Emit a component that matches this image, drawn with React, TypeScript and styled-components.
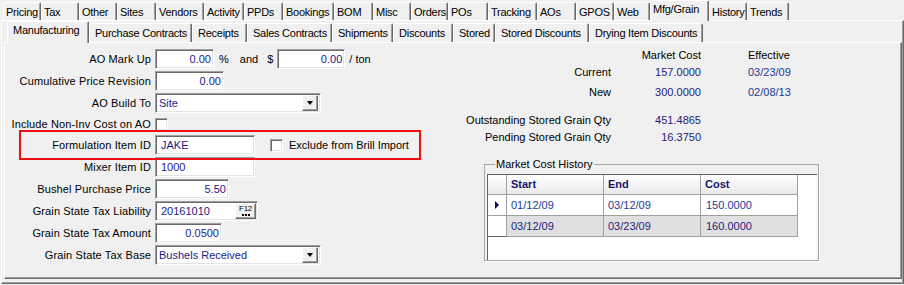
import React from 'react';
import styled, { createGlobalStyle } from 'styled-components';

const GlobalStyle = createGlobalStyle`
	html, body {
		margin: 0;
		padding: 0;
		background: #f0f0f0;
	}
	body {
		font-family: 'Liberation Sans', Arial, sans-serif;
		font-size: 11px;
		color: #000;
	}
`;

const Window = styled.div`
	width: 904px;
	height: 285px;
	box-sizing: border-box;
	padding: 0 0 1px 1px;
	background: #f0f0f0;
	display: flex;
	flex-direction: column;
	overflow: hidden;
`;

const TabStrip = styled.div<{ $h: number; $pl: number }>`
	display: flex;
	align-items: flex-end;
	flex: none;
	height: ${(p) => p.$h}px;
	padding-left: ${(p) => p.$pl}px;
	position: relative;
	z-index: 1;
`;

const Tab = styled.div<{ $w: number; $h: number; $pad: number; $active?: boolean }>`
	box-sizing: border-box;
	width: ${(p) => p.$w}px;
	height: ${(p) => (p.$active ? p.$h + 3 : p.$h)}px;
	margin-bottom: ${(p) => (p.$active ? -1 : 0)}px;
	padding: ${(p) => (p.$active ? 1 : 2)}px 0 0 ${(p) => p.$pad}px;
	line-height: 14px;
	letter-spacing: -0.25px;
	white-space: nowrap;
	overflow: hidden;
	background: #f0f0f0;
	border-top: 1px solid #fff;
	border-left: 1px solid #fff;
	border-right: 1px solid #696969;
	border-radius: 2px 2px 0 0;
	box-shadow: inset -1px 0 #a0a0a0;
`;

const Panel = styled.div<{ $p: string }>`
	flex: 1;
	box-sizing: border-box;
	display: flex;
	flex-direction: column;
	padding: ${(p) => p.$p};
	border: 1px solid;
	border-color: #fff #696969 #696969 #fff;
	box-shadow: inset -1px -1px #a0a0a0;
`;

const PageBody = styled.div`
	flex: 1;
	box-sizing: border-box;
	display: flex;
	padding-top: 4px;
	border: 1px solid;
	border-color: #fff #696969 #696969 #fff;
	box-shadow: inset -1px -1px #a0a0a0;
`;

/* ---------- left form ---------- */

const Form = styled.div`
	position: relative;
	width: 420px;
	margin-top: 2px;
	display: grid;
	grid-template-columns: 146px auto;
	grid-template-rows: 20px 20px 20px 18px 20px 20px 20px 20px 20px 20px;
	column-gap: 4px;
	row-gap: 2px;
	align-content: start;
`;

const Label = styled.div`
	align-self: center;
	text-align: right;
	white-space: nowrap;
	letter-spacing: 0.12px;
`;

const FieldRow = styled.div`
	display: flex;
	align-items: center;
`;

const Unit = styled.span<{ $ml: number }>`
	margin-left: ${(p) => p.$ml}px;
	white-space: nowrap;
`;

const TextBox = styled.div<{ $w: number; $right?: boolean; $ml?: number }>`
	box-sizing: border-box;
	width: ${(p) => p.$w}px;
	height: 20px;
	margin-left: ${(p) => p.$ml || 0}px;
	display: flex;
	align-items: center;
	justify-content: ${(p) => (p.$right ? 'flex-end' : 'flex-start')};
	padding: ${(p) => (p.$right ? '0 2px 0 0' : '0 0 0 5px')};
	background: #fff;
	color: #1c1a8a;
	border: 1px solid;
	border-color: #a0a0a0 #fff #fff #a0a0a0;
	box-shadow: inset 1px 1px #696969, inset -1px -1px #e3e3e3;
	white-space: nowrap;
`;

const Combo = styled(TextBox)`
	padding: 0 2px 0 3px;
	justify-content: space-between;
`;

const RaisedButton = styled.div<{ $w: number; $h: number }>`
	box-sizing: border-box;
	width: ${(p) => p.$w}px;
	height: ${(p) => p.$h}px;
	background: #f0f0f0;
	border: 1px solid;
	border-color: #fff #696969 #696969 #fff;
	box-shadow: inset -1px -1px #a0a0a0;
	display: flex;
	flex-direction: column;
	align-items: center;
	justify-content: center;
	flex: none;
`;

const DownArrow = styled.div`
	width: 0;
	height: 0;
	border-left: 3.5px solid transparent;
	border-right: 3.5px solid transparent;
	border-top: 4px solid #000;
	margin-left: -1px;
`;

const FKey = styled.div`
	font-size: 8px;
	line-height: 8px;
	letter-spacing: -0.3px;
	color: #000;
	margin-top: -1px;
`;

const Dots = styled.div`
	display: flex;
	gap: 1px;
	margin-top: 1px;
	span {
		width: 2px;
		height: 2px;
		background: #000;
	}
`;

const DateBox = styled(TextBox)`
	justify-content: space-between;
	padding-right: 1px;
`;

const CheckBox = styled.div<{ $ml?: number }>`
	box-sizing: border-box;
	width: 13px;
	height: 13px;
	margin-left: ${(p) => p.$ml || 0}px;
	background: #fff;
	border: 1px solid;
	border-color: #a0a0a0 #fff #fff #a0a0a0;
	box-shadow: inset 1px 1px #696969, inset -1px -1px #e3e3e3;
	align-self: center;
	flex: none;
`;

const Highlight = styled.div`
	position: absolute;
	left: 14px;
	top: 81px;
	width: 402px;
	height: 30px;
	box-sizing: border-box;
	border: 2px solid #f01010;
	pointer-events: none;
`;

/* ---------- right side ---------- */

const Side = styled.div`
	margin-left: 37px;
	display: flex;
	flex-direction: column;
`;

const InfoRow = styled.div<{ $mt?: number }>`
	display: grid;
	grid-template-columns: 149px 90px auto;
	height: 17px;
	line-height: 17px;
	margin-top: ${(p) => p.$mt || 0}px;
	white-space: nowrap;
`;

const InfoLabel = styled.div`
	text-align: right;
`;

const InfoValue = styled.div<{ $head?: boolean }>`
	text-align: right;
	color: ${(p) => (p.$head ? '#000' : '#26207e')};
`;

const InfoDate = styled.div<{ $head?: boolean }>`
	padding-left: 47px;
	color: ${(p) => (p.$head ? '#000' : '#1c3a98')};
`;

const Group = styled.fieldset`
	margin: 12px 0 0 22px;
	width: 335px;
	box-sizing: border-box;
	padding: 3px 0 0 2px;
	border: 1px solid #a8a8a8;
	box-shadow: 1px 1px #fff;
	min-inline-size: 0;
	legend {
		margin-left: 8px;
		padding: 0 1px;
		line-height: 13px;
	}
`;

const Grid = styled.div`
	width: 330px;
	height: 86px;
	box-sizing: border-box;
	background: #fff;
	border-top: 1px solid #646464;
	border-left: 1px solid #646464;
	display: grid;
	grid-template-columns: 19px 97px 97px 97px;
	grid-template-rows: 20px 21px 21px;
	align-content: start;
`;

const HeadCell = styled.div`
	box-sizing: border-box;
	background: linear-gradient(#ffffff, #f2f2f2 60%, #e8e8e8);
	border-right: 1px solid #a0a0a0;
	border-bottom: 1px solid #a0a0a0;
	padding-left: 4px;
	line-height: 19px;
	font-weight: bold;
	color: #16166e;
`;

const RowHead = styled.div<{ $last?: boolean }>`
	box-sizing: border-box;
	background: #fff;
	border-right: 1px solid #a0a0a0;
	border-bottom: 1px solid ${(p) => (p.$last ? '#646464' : '#a0a0a0')};
	display: flex;
	align-items: center;
	justify-content: center;
`;

const Pointer = styled.div`
	width: 0;
	height: 0;
	border-top: 4px solid transparent;
	border-bottom: 4px solid transparent;
	border-left: 4px solid #0a0a50;
	margin-left: -1px;
`;

const Cell = styled.div<{ $alt?: boolean; $pl?: number }>`
	box-sizing: border-box;
	background: ${(p) => (p.$alt ? '#e0e0e0' : '#fff')};
	border-right: 1px solid #a0a0a0;
	border-bottom: 1px solid #a0a0a0;
	padding-left: ${(p) => p.$pl || 4}px;
	line-height: 20px;
	color: ${(p) => (p.$alt ? '#26207e' : '#1c3a98')};
`;

const outerTabs: [string, number][] = [
	['Pricing', 38], ['Tax', 38], ['Other', 38], ['Sites', 39], ['Vendors', 48], ['Activity', 40],
	['PPDs', 39], ['Bookings', 51], ['BOM', 39], ['Misc', 38], ['Orders', 37], ['POs', 40],
	['Tracking', 49], ['AOs', 39], ['GPOS', 38], ['Web', 36], ['Mfg/Grain', 59], ['History', 38],
	['Trends', 42],
];

const innerTabs: [string, number][] = [
	['Manufacturing', 82], ['Purchase Contracts', 103], ['Receipts', 55], ['Sales Contracts', 85],
	['Shipments', 61], ['Discounts', 60], ['Stored', 42], ['Stored Discounts', 94],
	['Drying Item Discounts', 114],
];

const history = [
	{ start: '01/12/09', end: '03/12/09', cost: '150.0000' },
	{ start: '03/12/09', end: '03/23/09', cost: '160.0000' },
];

export default function App() {
	return (
		<>
			<GlobalStyle />
			<Window>
				<TabStrip $h={20} $pl={2}>
					{outerTabs.map(([name, w]) => (
						<Tab key={name} $w={w} $h={18} $pad={2} $active={name === 'Mfg/Grain'}>
							{name}
						</Tab>
					))}
				</TabStrip>
				<Panel $p='0 1px 4px 2px'>
					<TabStrip $h={21} $pl={3}>
						{innerTabs.map(([name, w]) => (
							<Tab key={name} $w={w} $h={19} $pad={5} $active={name === 'Manufacturing'}>
								{name}
							</Tab>
						))}
					</TabStrip>
					<PageBody>
						<Form>
							<Label>AO Mark Up</Label>
							<FieldRow>
								<TextBox $w={59} $right>0.00</TextBox>
								<Unit $ml={5}>%</Unit>
								<Unit $ml={11}>and</Unit>
								<Unit $ml={9}>$</Unit>
								<TextBox $w={68} $right $ml={4}>0.00</TextBox>
								<Unit $ml={4}>/ ton</Unit>
							</FieldRow>

							<Label>Cumulative Price Revision</Label>
							<FieldRow>
								<TextBox $w={69} $right>0.00</TextBox>
							</FieldRow>

							<Label>AO Build To</Label>
							<FieldRow>
								<Combo $w={166}>
									Site
									<RaisedButton $w={16} $h={16}>
										<DownArrow />
									</RaisedButton>
								</Combo>
							</FieldRow>

							<Label>Include Non-Inv Cost on AO</Label>
							<FieldRow>
								<CheckBox />
							</FieldRow>

							<Label>Formulation Item ID</Label>
							<FieldRow>
								<TextBox $w={100}>JAKE</TextBox>
								<CheckBox $ml={15} />
								<Unit $ml={6}>Exclude from Brill Import</Unit>
							</FieldRow>

							<Label>Mixer Item ID</Label>
							<FieldRow>
								<TextBox $w={100}>1000</TextBox>
							</FieldRow>

							<Label>Bushel Purchase Price</Label>
							<FieldRow>
								<TextBox $w={74} $right>5.50</TextBox>
							</FieldRow>

							<Label>Grain State Tax Liability</Label>
							<FieldRow>
								<DateBox $w={103}>
									20161010
									<RaisedButton $w={21} $h={16}>
										<FKey>F12</FKey>
										<Dots>
											<span />
											<span />
											<span />
										</Dots>
									</RaisedButton>
								</DateBox>
							</FieldRow>

							<Label>Grain State Tax Amount</Label>
							<FieldRow>
								<TextBox $w={67} $right>0.0500</TextBox>
							</FieldRow>

							<Label>Grain State Tax Base</Label>
							<FieldRow>
								<Combo $w={166}>
									Bushels Received
									<RaisedButton $w={16} $h={16}>
										<DownArrow />
									</RaisedButton>
								</Combo>
							</FieldRow>

							<Highlight />
						</Form>

						<Side>
							<InfoRow>
								<InfoLabel />
								<InfoValue $head>Market Cost</InfoValue>
								<InfoDate $head>Effective</InfoDate>
							</InfoRow>
							<InfoRow>
								<InfoLabel>Current</InfoLabel>
								<InfoValue>157.0000</InfoValue>
								<InfoDate>03/23/09</InfoDate>
							</InfoRow>
							<InfoRow $mt={3}>
								<InfoLabel>New</InfoLabel>
								<InfoValue>300.0000</InfoValue>
								<InfoDate>02/08/13</InfoDate>
							</InfoRow>
							<InfoRow $mt={11}>
								<InfoLabel>Outstanding Stored Grain Qty</InfoLabel>
								<InfoValue>451.4865</InfoValue>
							</InfoRow>
							<InfoRow>
								<InfoLabel>Pending Stored Grain Qty</InfoLabel>
								<InfoValue>16.3750</InfoValue>
							</InfoRow>

							<Group>
								<legend>Market Cost History</legend>
								<Grid>
									<HeadCell />
									<HeadCell>Start</HeadCell>
									<HeadCell>End</HeadCell>
									<HeadCell>Cost</HeadCell>
									{history.map((r, i) => (
										<React.Fragment key={i}>
											<RowHead $last={i === history.length - 1}>{i === 0 && <Pointer />}</RowHead>
											<Cell $alt={i % 2 === 1}>{r.start}</Cell>
											<Cell $alt={i % 2 === 1}>{r.end}</Cell>
											<Cell $alt={i % 2 === 1} $pl={5}>{r.cost}</Cell>
										</React.Fragment>
									))}
								</Grid>
							</Group>
						</Side>
					</PageBody>
				</Panel>
			</Window>
		</>
	);
}
